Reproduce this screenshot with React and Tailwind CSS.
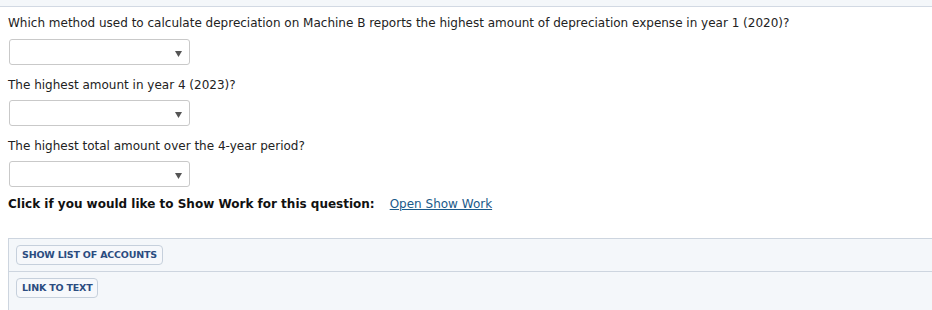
import React from "react";

const questions = [
  "Which method used to calculate depreciation on Machine B reports the highest amount of depreciation expense in year 1 (2020)?",
  "The highest amount in year 4 (2023)?",
  "The highest total amount over the 4-year period?",
];

const Dropdown = () => (
  <div className="relative w-[181px] h-[26px] border border-[#c9c9c9] rounded-[3px] bg-white">
    <svg className="absolute right-[7px] top-[11px]" width="7" height="6" viewBox="0 0 7 6">
      <path d="M0 0 L7 0 L3.5 6 Z" fill="#555" />
    </svg>
  </div>
);

const ToolButton = ({ children }) => (
  <button
    type="button"
    className="h-[20px] px-[5px] border border-[#c6d0dc] rounded-[4px] bg-[#f6f8fb] text-[9.5px] font-bold text-[#2b4c80] leading-none tracking-[-0.2px]"
  >
    {children}
  </button>
);

export default function App() {
  return (
    <div
      className="w-[932px] h-[310px] bg-white text-[#222] overflow-hidden"
      style={{ fontFamily: '"DejaVu Sans", Verdana, sans-serif' }}
    >
      <div className="h-[7px] bg-[#f4f7fa] border-b border-[#d2d9e3]" />

      <div className="pl-[8px] text-[12px]">
        <p className="mt-[9px] leading-[14px]">{questions[0]}</p>
        <div className="mt-[9px] ml-[1px]">
          <Dropdown />
        </div>
        <p className="mt-[13px] leading-[14px]">{questions[1]}</p>
        <div className="mt-[8px] ml-[1px]">
          <Dropdown />
        </div>
        <p className="mt-[13px] leading-[14px]">{questions[2]}</p>
        <div className="mt-[8px] ml-[1px]">
          <Dropdown />
        </div>
        <div className="mt-[10px] flex items-center leading-[14px]">
          <span className="font-bold text-[#111]">Click if you would like to Show Work for this question:</span>
          <a href="#" className="ml-[15px] text-[#1b5a8a] underline">Open Show Work</a>
        </div>
      </div>

      <div className="ml-[8px] mt-[27px] border-t border-l border-[#cdd5df] bg-[#f4f7fa]">
        <div className="h-[33px] flex items-center pl-[7px] border-b border-[#cdd5df]">
          <ToolButton>SHOW LIST OF ACCOUNTS</ToolButton>
        </div>
        <div className="h-[40px] flex items-start pt-[6px] pl-[7px]">
          <ToolButton>LINK TO TEXT</ToolButton>
        </div>
      </div>
    </div>
  );
}
